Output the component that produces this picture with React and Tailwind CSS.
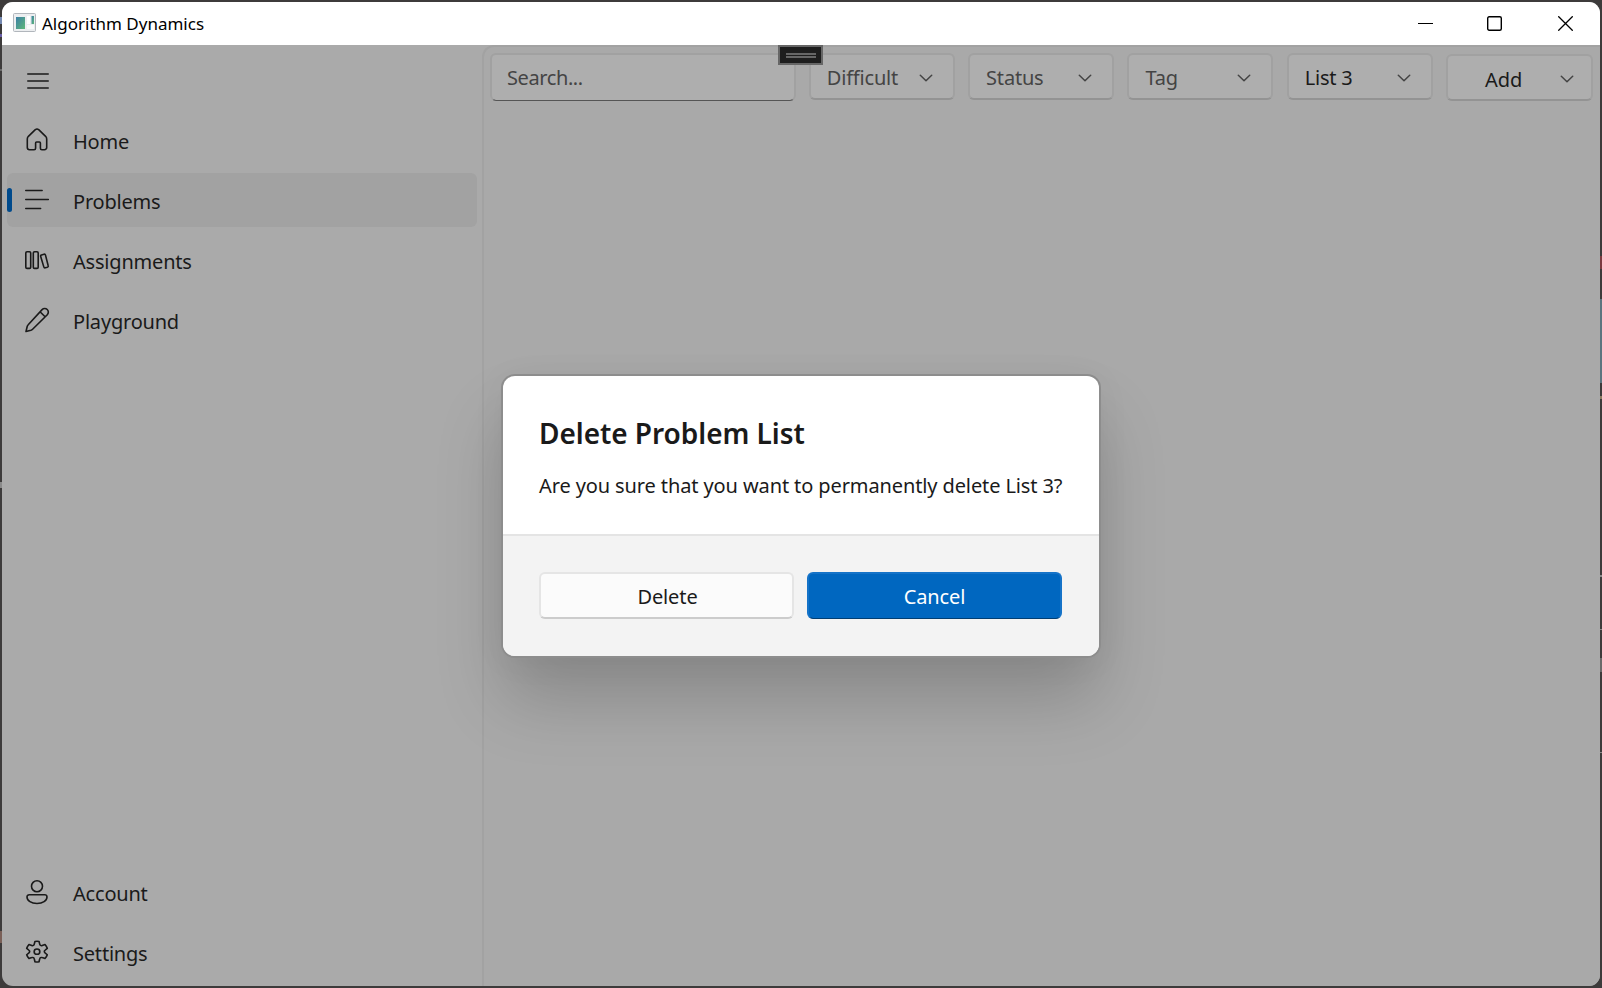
import React from "react";

const stroke = {
  fill: "none",
  stroke: "#1a1a1a",
  strokeWidth: 1.6,
  strokeLinecap: "round",
  strokeLinejoin: "round",
};

function HomeIcon() {
  return (
    <svg className="-mt-[2px]" width="26" height="26" viewBox="0 0 26 26" {...stroke}>
      <path d="M4.400 10.300 11.300 3.700a2.400 2.400 0 0 1 3.400 0l6.900 6.600c.7.700 1.100 1.600 1.100 2.600v8.600a2.200 2.200 0 0 1-2.200 2.200h-2.600a1.500 1.500 0 0 1-1.500-1.500v-5.200a1 1 0 0 0-1-1h-2.800a1 1 0 0 0-1 1v5.200a1.500 1.500 0 0 1-1.500 1.500H5.500a2.200 2.200 0 0 1-2.200-2.200v-8.600c0-1 .4-1.900 1.100-2.600Z" />
    </svg>
  );
}

function LinesIcon() {
  return (
    <svg className="-mt-[2px]" width="26" height="26" viewBox="0 0 26 26" {...stroke} strokeWidth="1.4">
      <path d="M1.700 4.500h16.500M1.700 13.500h22.700M1.700 22.500h15" />
    </svg>
  );
}

function BooksIcon() {
  return (
    <svg width="26" height="26" viewBox="0 0 26 26" {...stroke}>
      <rect x="1.800" y="4.700" width="4.900" height="16.700" rx="1.200" />
      <rect x="9.300" y="4.700" width="4.900" height="16.700" rx="1.200" />
      <path d="M17.500 7.900 20 7.200c.7-.2 1.300.2 1.500.9l2.700 10.700c.2.700-.2 1.300-.9 1.500l-2 .5c-.7.200-1.300-.2-1.500-.9L16.700 9.400c-.2-.7.100-1.300.8-1.500Z" />
    </svg>
  );
}

function PencilIcon() {
  return (
    <svg width="26" height="26" viewBox="0 0 26 26" {...stroke}>
      <path d="M18.100 2.600a3.600 3.600 0 0 1 5.200 5.100L8.600 22.300a4 4 0 0 1-1.700 1L2 24.500l1.200-5a4 4 0 0 1 1-1.700ZM16 4.700l5.100 5.100" />
    </svg>
  );
}

function PersonIcon() {
  return (
    <svg width="26" height="26" viewBox="0 0 26 26" {...stroke}>
      <circle cx="13" cy="7.200" r="5.500" />
      <path d="M5.200 15.700h15.600a2.200 2.200 0 0 1 2.200 2.200c0 4-4.400 6.600-10 6.600s-10-2.600-10-6.600a2.200 2.200 0 0 1 2.200-2.200Z" />
    </svg>
  );
}

function GearIcon() {
  return (
    <svg width="26" height="26" viewBox="0 0 26 26" {...stroke}>
      <g transform="translate(-1.700 -.5) scale(1.130 1.070)" strokeWidth="1.450">
        <path d="M11.200 2.700q1.800-.4 3.600 0l.6 2.600a1.600 1.600 0 0 0 2.200 1.300l2.500-.9q1.400 1.500 2 3.500l-2 1.800a1.600 1.600 0 0 0 0 2.500l2 1.700q-.6 2-2 3.500l-2.500-.9a1.600 1.600 0 0 0-2.200 1.300l-.6 2.600q-1.800.4-3.600 0l-.6-2.600a1.600 1.600 0 0 0-2.200-1.300l-2.500.9q-1.400-1.500-2-3.500l2-1.700a1.600 1.600 0 0 0 0-2.500l-2-1.800q.6-2 2-3.500l2.500.9a1.600 1.600 0 0 0 2.200-1.300Z" />
        <circle cx="13" cy="12.300" r="2.500" />
      </g>
    </svg>
  );
}

function Chevron() {
  return (
    <svg
      className="mt-[2px]"
      width="14"
      height="8"
      viewBox="0 0 14 8"
      fill="none"
      stroke="#444444"
      strokeWidth="1.5"
      strokeLinecap="round"
      strokeLinejoin="round"
    >
      <path d="M1.300 1.200 7 6.700l5.700-5.500" />
    </svg>
  );
}

function NavItem({ icon, label, selected }) {
  return (
    <div
      className={
        "flex h-[54px] items-center rounded-md " + (selected ? "bg-[#a2a2a2]" : "")
      }
    >
      <span
        className={"h-6 w-[5px] rounded-full " + (selected ? "bg-[#004a8c]" : "")}
      />
      <span className="ml-3 flex w-[26px] justify-center">{icon}</span>
      <span className="mt-[3px] ml-[23px] tracking-[-0.2px]">{label}</span>
    </div>
  );
}

function Combo({ label, filled }) {
  return (
    <div className="flex h-[47px] w-[146px] items-center justify-between rounded-md border-2 border-[#a1a1a1] border-b-[#939393] bg-[#aeaeae] pr-[20px] pl-[16px]">
      <span
        className={
          "mt-[2px] tracking-[-0.2px] " + (filled ? "text-[#1a1a1a]" : "text-[#444444]")
        }
      >
        {label}
      </span>
      <Chevron />
    </div>
  );
}

function TitleBar() {
  return (
    <header className="flex h-[43px] shrink-0 items-center bg-white">
      <svg className="-mt-[3px] ml-[11px]" width="23" height="19" viewBox="0 0 23 19">
        <defs>
          <linearGradient id="pane" x1="0" y1="0" x2="1" y2="1">
            <stop offset="0" stopColor="#3b7fa6" />
            <stop offset="1" stopColor="#5fb878" />
          </linearGradient>
        </defs>
        <rect x=".5" y=".5" width="22" height="18" rx="1" fill="#eceef0" stroke="#b1b6bc" />
        <rect x="3" y="4" width="9" height="12" fill="url(#pane)" />
        <rect x="14" y="3" width="3" height="8" fill="#fff" />
        <rect x="18.500" y="3" width="2.500" height="8" fill="url(#pane)" />
        <rect x="14" y="12" width="7" height="4" fill="#fafafa" />
      </svg>
      <span className="ml-[6px] text-[17px] text-black">Algorithm Dynamics</span>
      <div className="mr-[27px] ml-auto flex items-center pb-px">
        <svg width="15" height="15" viewBox="0 0 15 15" stroke="#000">
          <path d="M0 7.500h15" />
        </svg>
        <svg className="ml-[54px]" width="15" height="15" viewBox="0 0 15 15" fill="none" stroke="#000" strokeWidth="1.400">
          <rect x=".7" y=".7" width="13.600" height="13.600" rx="1.500" />
        </svg>
        <svg className="ml-[56px]" width="15" height="15" viewBox="0 0 15 15" stroke="#000" strokeWidth="1.300">
          <path d="m.3.3 14.400 14.400m0-14.400L.3 14.700" />
        </svg>
      </div>
    </header>
  );
}

function Sidebar() {
  return (
    <nav className="flex w-[480px] shrink-0 flex-col pt-[9px] pr-[5px] pb-[7px] pl-[5px]">
      <div className="flex h-[54px] items-center pl-5">
        <svg width="22" height="18" viewBox="0 0 22 18" {...stroke}>
          <path d="M.8 2h20.400M.8 9h20.400M.8 16h20.400" />
        </svg>
      </div>
      <div className="mt-[5px] flex flex-col gap-[6px]">
        <NavItem icon={<HomeIcon />} label="Home" />
        <NavItem icon={<LinesIcon />} label="Problems" selected />
        <NavItem icon={<BooksIcon />} label="Assignments" />
        <NavItem icon={<PencilIcon />} label="Playground" />
      </div>
      <div className="mt-auto flex flex-col gap-[6px]">
        <NavItem icon={<PersonIcon />} label="Account" />
        <NavItem icon={<GearIcon />} label="Settings" />
      </div>
    </nav>
  );
}

function Toolbar() {
  return (
    <div className="flex items-start gap-[13.3px] pt-[6px] pl-[6px]">
      <div className="flex h-[48px] w-[305.5px] items-center rounded-md border-2 border-b border-[#a1a1a1] border-b-[#555555] bg-[#aeaeae] pt-px pl-[15px] tracking-[-0.4px] text-[#444444]">
        Search...
      </div>
      <Combo label="Difficult" />
      <Combo label="Status" />
      <Combo label="Tag" />
      <Combo label="List 3" filled />
      <div className="mt-px flex h-[47px] w-[147px] items-center rounded-md border-2 border-[#a1a1a1] border-b-[#939393] bg-[#aeaeae] pr-[17px] pl-[37px]">
        <span className="mt-[4px]">Add</span>
        <span className="ml-auto">
          <Chevron />
        </span>
      </div>
    </div>
  );
}

function DeleteDialog() {
  return (
    <div className="absolute top-[376px] left-[503px] flex h-[280px] w-[596px] flex-col overflow-hidden rounded-xl bg-white shadow-[0_0_0_2px_#8d8d8d,0_44px_68px_rgba(0,0,0,0.19),0_4px_36px_rgba(0,0,0,0.05)]">
      <div className="flex h-[158px] flex-col px-9 pt-[37px]">
        <h1 className="text-[28px] leading-10 font-semibold tracking-[-0.05px]">
          Delete Problem List
        </h1>
        <p className="mt-[19px] leading-[28px] tracking-[-0.11px]">
          Are you sure that you want to permanently delete List 3?
        </p>
      </div>
      <div className="flex grow items-start gap-[13px] border-t-2 border-[#e4e4e4] bg-[#f3f3f3] px-9 pt-9">
        <button className="h-[47px] w-[255px] rounded-md border-2 border-[#e5e5e5] border-b-[#cccccc] bg-[#fbfbfb] pt-[3px] pl-[2px] tracking-[-0.1px]">
          Delete
        </button>
        <button className="h-[47px] w-[255px] rounded-md border-2 border-b border-[#1573c8] border-b-[#003e73] bg-[#0067c0] pt-px tracking-[-0.1px] text-white">
          Cancel
        </button>
      </div>
    </div>
  );
}

function DesktopEdge() {
  return (
    <>
      <div className="absolute top-0 right-0 flex h-full w-[2px] flex-col">
        <span className="mt-[256px] h-[13px] bg-[#7c3a40]" />
        <span className="mt-[30px] h-[84px] bg-[#5c757f]" />
        <span className="mt-[13px] h-[3px] bg-[#8a7a60]" />
        <span className="mt-[176px] h-[2px] bg-[#8a8a8a]" />
        <span className="mt-[52px] h-px bg-[#8a8a8a]" />
        <span className="mt-[28px] h-[14px] bg-[#6a6a6a]" />
        <span className="mt-[80px] h-px bg-[#8a8a8a]" />
      </div>
      <div className="absolute top-0 left-0 flex h-full w-[2px] flex-col">
        <span className="mt-[17px] h-[7px] bg-[#7488b0]" />
        <span className="mt-[10px] h-[3px] bg-[#6a5fa8]" />
        <span className="mt-[32px] h-[2px] bg-[#6a6a6a]" />
        <span className="mt-[411px] h-[6px] bg-[#8a8a8a]" />
        <span className="mt-[443px] h-[12px] bg-[#7a6058]" />
      </div>
    </>
  );
}

export default function App() {
  return (
    <div className="relative h-[988px] w-[1602px] overflow-hidden bg-[#3d3b3b] p-[2px] font-['Noto_Sans',sans-serif] text-[20px] text-[#1a1a1a]">
      <DesktopEdge />
      <div className="flex h-[984px] w-[1598px] flex-col overflow-hidden rounded-[11px] bg-[#aaaaaa]">
        <TitleBar />
        <div className="flex grow">
          <Sidebar />
          <main className="grow rounded-tl-xl border-t-2 border-l-2 border-[#a2a2a2] bg-[#a9a9a9]">
            <Toolbar />
          </main>
        </div>
      </div>
      <div className="absolute top-[45px] left-[778px] flex h-[20px] w-[45px] flex-col items-center justify-center gap-px border-2 border-[#666666] bg-[#1e1e1e]">
        <span className="h-[2px] w-[30px] bg-[#666666]" />
        <span className="h-[2px] w-[30px] bg-[#666666]" />
      </div>
      <DeleteDialog />
    </div>
  );
}
